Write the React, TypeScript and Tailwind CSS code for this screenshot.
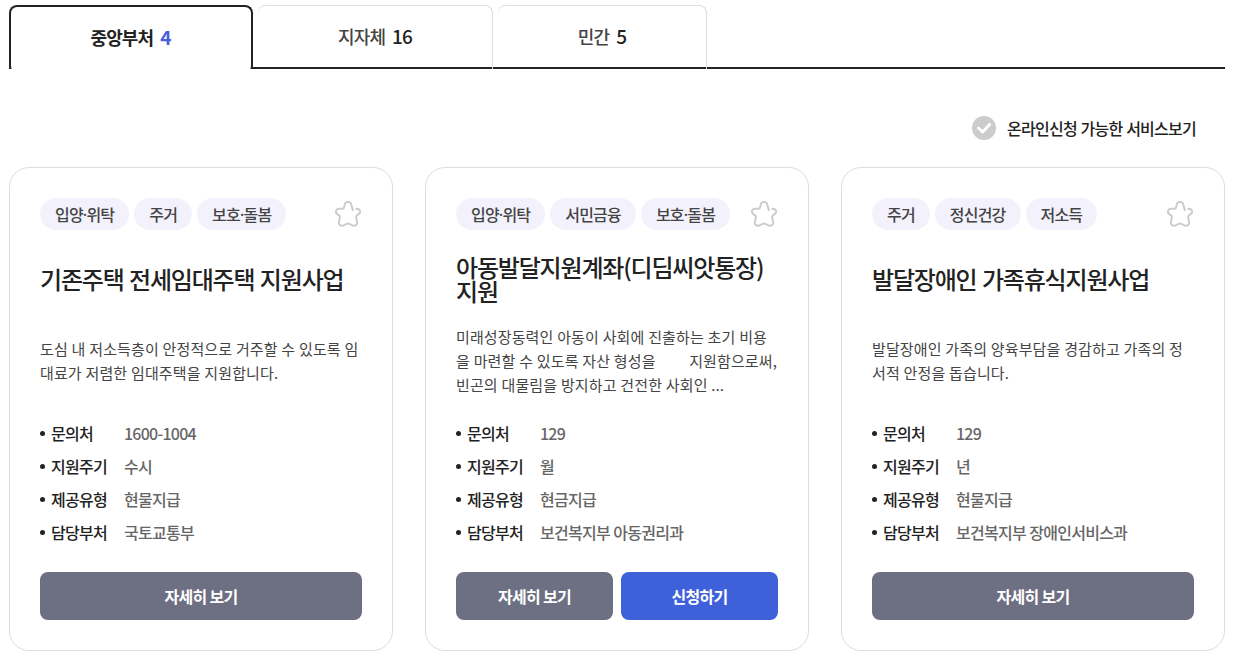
import React, { useState } from 'react';
import clsx from 'clsx';

interface Service {
  id: number;
  tags: string[];
  title: string;
  summary: string[];
  contact: string;
  cycle: string;
  type: string;
  department: string;
  canApply?: boolean;
}

const tabs = [
  { label: '중앙부처', count: 4, width: 'w-[244px]' },
  { label: '지자체', count: 16, width: 'w-[235px] ml-[5px]' },
  { label: '민간', count: 5, width: 'w-[209px] ml-[5px]' },
];

const services: Service[] = [
  {
    id: 1,
    tags: ['입양·위탁', '주거', '보호·돌봄'],
    title: '기존주택 전세임대주택 지원사업',
    summary: ['도심 내 저소득층이 안정적으로 거주할 수 있도록 임', '대료가 저렴한 임대주택을 지원합니다.'],
    contact: '1600-1004',
    cycle: '수시',
    type: '현물지급',
    department: '국토교통부',
  },
  {
    id: 2,
    tags: ['입양·위탁', '서민금융', '보호·돌봄'],
    title: '아동발달지원계좌(디딤씨앗통장) 지원',
    summary: [
      '미래성장동력인 아동이 사회에 진출하는 초기 비용',
      '을 마련할 수 있도록 자산 형성을         지원함으로써,',
      '빈곤의 대물림을 방지하고 건전한 사회인 ...',
    ],
    contact: '129',
    cycle: '월',
    type: '현금지급',
    department: '보건복지부 아동권리과',
    canApply: true,
  },
  {
    id: 3,
    tags: ['주거', '정신건강', '저소득'],
    title: '발달장애인 가족휴식지원사업',
    summary: ['발달장애인 가족의 양육부담을 경감하고 가족의 정', '서적 안정을 돕습니다.'],
    contact: '129',
    cycle: '년',
    type: '현물지급',
    department: '보건복지부 장애인서비스과',
  },
];

function StarIcon() {
  return (
    <svg width="28" height="28" viewBox="0 0 28 28" fill="none" stroke="#ccc" strokeWidth="2" strokeLinecap="round" strokeLinejoin="round">
      <path d="M18.9 10.2 17.1 4.3C16.5 1.3 11.5 1.3 10.9 4.3L10 7.5C9.8 8.3 9.3 8.7 8.5 8.7L4.9 8.8C1.7 9 .8 12 3.1 13.9L5.2 15.6C5.8 16.1 6 16.7 5.8 17.5L4.9 21.5C4.2 24.5 6.6 26.7 9.4 25.4L12.8 23.8C13.6 23.4 14.4 23.4 15.2 23.8L18.6 25.4C21.4 26.7 23.8 24.5 23.1 21.5L22.2 17.5C22 16.7 22.2 16.1 22.8 15.6L24.9 13.9C27.2 12 26.3 8.8 22.2 8.8" />
    </svg>
  );
}

function InfoRow({ label, value }: { label: string; value: string }) {
  return (
    <li className="flex h-6 items-center text-[16px] font-medium">
      <span className="mr-[6px] mb-0.5 size-[5px] rounded-full bg-[#222]" />
      <span className="w-[73px] pb-0.5 tracking-[-0.75px] text-[#222]">{label}</span>
      <span className="pb-0.5 tracking-[-0.75px] text-[#666] [word-spacing:0.6px]">{value}</span>
    </li>
  );
}

function ServiceCard({ service }: { service: Service }) {
  return (
    <article className="flex flex-col rounded-[20px] border border-[#ddd] p-[30px]">
      <div className="flex items-start justify-between">
        <div className="flex gap-[5px] font-['Noto_Sans','Noto_Sans_CJK_KR',sans-serif]">
          {service.tags.map((tag) => (
            <span key={tag} className="h-8 rounded-full bg-[#f3f2fc] px-[15px] pt-px text-[16px] leading-8 font-medium tracking-[-0.8px] text-[#444]">
              {tag}
            </span>
          ))}
        </div>
        <button className="mt-0.5" aria-label="관심 서비스">
          <StarIcon />
        </button>
      </div>

      <div className="mt-[25px] flex h-12 items-center">
        <h3 className="text-[24px] leading-6 font-medium tracking-[-1.18px] break-keep text-[#222] [word-spacing:1.2px]">{service.title}</h3>
      </div>

      <div className="mt-[22px] flex h-[72px] flex-col justify-center">
        {service.summary.map((line) => (
          <p key={line} className="text-[15px] leading-6 tracking-[0.12px] whitespace-pre text-[#444] [word-spacing:0.25px]">{line}</p>
        ))}
      </div>

      <ul className="mt-[25px] flex flex-col gap-[9px]">
        <InfoRow label="문의처" value={service.contact} />
        <InfoRow label="지원주기" value={service.cycle} />
        <InfoRow label="제공유형" value={service.type} />
        <InfoRow label="담당부처" value={service.department} />
      </ul>

      <div className="mt-[27px] flex gap-2 text-[16px] font-bold tracking-[-0.7px] text-white [word-spacing:1px]">
        <button className="h-12 flex-1 rounded-lg bg-[#6d6f82]">자세히 보기</button>
        {service.canApply && <button className="h-12 flex-1 rounded-lg bg-[#3e61d9]">신청하기</button>}
      </div>
    </article>
  );
}

export default function App() {
  const [active, setActive] = useState(0);

  return (
    <div className="h-[661px] w-[1233px] overflow-hidden bg-white pt-[5px] pr-2 pl-[9px] font-['Noto_Sans_CJK_KR','Noto_Sans',sans-serif]">
      {/* Tabs */}
      <div className="flex h-16 shadow-[inset_0_-2px_0_#222]">
        {tabs.map((tab, i) => (
          <button
            key={tab.label}
            onClick={() => setActive(i)}
            className={clsx(
              'flex items-center justify-center gap-[7px] text-[18px] tracking-[-0.9px]',
              tab.width,
              i === active
                ? 'rounded-t-lg rounded-b-[3px] border-2 border-b-0 border-[#222] bg-white pr-px pb-px font-bold text-[#222]'
                : 'rounded-t-lg border-t border-r border-[#ddd] pb-0.5 font-medium text-[#444]'
            )}
          >
            {tab.label}
            <span className={clsx('text-[19px]', i === active ? 'text-[#4a5fdc]' : 'text-[#222]')}>{tab.count}</span>
          </button>
        ))}
      </div>

      {/* Online filter */}
      <div className="mt-[47px] mr-[29px] flex h-6 items-center justify-end gap-[11px]">
        <svg width="24" height="24" viewBox="0 0 24 24" fill="none">
          <circle cx="12" cy="12" r="12" fill="#ccc" />
          <path d="M6.5 12 10.6 16 17.6 8.5" stroke="#fff" strokeWidth="3" strokeLinecap="round" strokeLinejoin="round" />
        </svg>
        <span className="text-[16px] font-medium tracking-[-0.75px] text-[#222] [word-spacing:0.8px]">온라인신청 가능한 서비스보기</span>
      </div>

      {/* Cards */}
      <div className="mt-[27px] grid grid-cols-3 gap-8">
        {services.map((service) => (
          <ServiceCard key={service.id} service={service} />
        ))}
      </div>
    </div>
  );
}
